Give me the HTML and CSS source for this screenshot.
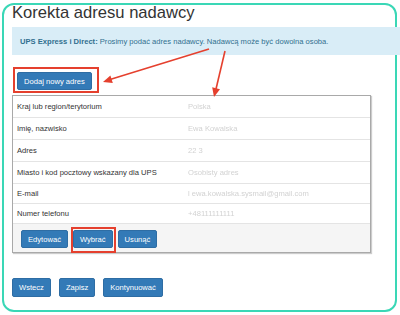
FILE: index.html
```html
<!DOCTYPE html>
<html lang="pl">
<head>
    <meta charset="UTF-8">
    <meta name="viewport" content="width=device-width, initial-scale=1.0">
    <title>Korekta adresu nadawcy</title>
    <link rel="stylesheet" href="styles.css">
</head>
<body>
    <div class="frame">
        <h1 class="title">Korekta adresu nadawcy</h1>

        <!-- informacja -->
        <div class="alert"><b>UPS Express i Direct:</b>&nbsp;Prosimy podać adres nadawcy. Nadawcą może być dowolna osoba.</div>

        <div class="add-row">
            <span class="mark mark-add"><button class="btn" type="button">Dodaj nowy adres</button></span>
        </div>

        <!-- adres -->
        <div class="panel">
            <div class="row"><span class="label">Kraj lub region/terytorium</span><span class="value">Polska</span></div>
            <div class="row"><span class="label">Imię, nazwisko</span><span class="value">Ewa Kowalska</span></div>
            <div class="row"><span class="label">Adres</span><span class="value">22 3</span></div>
            <div class="row"><span class="label">Miasto i kod pocztowy wskazany dla UPS</span><span class="value">Osobisty adres</span></div>
            <div class="row short"><span class="label">E-mail</span><span class="value">l ewa.kowalska.sysmail@gmail.com</span></div>
            <div class="row short"><span class="label">Numer telefonu</span><span class="value">+48111111111</span></div>
            <div class="panel-footer">
                <button class="btn btn-edit" type="button">Edytować</button>
                <span class="mark mark-pick"><button class="btn" type="button">Wybrać</button></span>
                <button class="btn btn-del" type="button">Usunąć</button>
            </div>
        </div>

        <div class="actions">
            <button class="btn btn-lg" type="button">Wstecz</button>
            <button class="btn btn-lg" type="button">Zapisz</button>
            <button class="btn btn-lg" type="button">Kontynuować</button>
        </div>
    </div>

    <!-- strzałki -->
    <svg class="arrows" width="400" height="315" viewBox="0 0 400 315">
        <line x1="209" y1="49" x2="110" y2="79.5" stroke="#e5402e" stroke-width="1.6"/>
        <polygon points="103,82 112.8,83.1 110.4,75.5" fill="#e5402e"/>
        <line x1="225" y1="51" x2="216" y2="89" stroke="#e5402e" stroke-width="1.6"/>
        <polygon points="214,97 220,89.2 212.2,87.3" fill="#e5402e"/>
    </svg>
</body>
</html>
```

FILE: styles.css
```css
body {
    margin: 0;
    width: 400px;
    height: 315px;
    overflow: hidden;
    position: relative;
    font-family: "Liberation Sans", Arial, sans-serif;
    color: #333333;
    background-color: #ffffff;
}

.frame {
    margin: 3px 3px 0 2px;
    height: 305px;
    padding-left: 8px;
    border: 2px solid #3ad7b6;
    border-radius: 12px;
}

.title {
    margin: 0;
    font-size: 16.6px;
    line-height: 16px;
    font-weight: normal;
    color: #333333;
}

.alert {
    display: flex;
    align-items: center;
    height: 28px;
    margin: 6px -5px 0 0;
    padding: 0 8px;
    background-color: #d9edf7;
    color: #31708f;
    font-size: 7.6px;
}

.add-row {
    display: flex;
    margin: 12px 0 0 1px;
}

.mark {
    display: inline-flex;
    border: 2px solid #e5402e;
}

.mark-add {
    padding: 3px 5px 1px 2px;
}

.btn {
    display: inline-flex;
    align-items: center;
    box-sizing: border-box;
    height: 18px;
    padding: 0 6px;
    font-family: "Liberation Sans", Arial, sans-serif;
    font-size: 7.6px;
    color: #ffffff;
    background-color: #337ab7;
    border: 1px solid #2e6da4;
    border-radius: 2px;
}

.btn-lg {
    height: 19px;
}

.panel {
    width: 359px;
    margin-top: 2px;
    box-sizing: border-box;
    border: 1px solid #a9a9a9;
    box-shadow: 1px 1px 1px rgba(0, 0, 0, 0.2);
}

.row {
    display: flex;
    align-items: center;
    box-sizing: border-box;
    height: 22px;
    border-bottom: 1px solid #e4e4e4;
    font-size: 7.6px;
}

.row.short {
    height: 20px;
}

.label {
    flex: 0 0 175px;
    box-sizing: border-box;
    padding-left: 4px;
}

.value {
    color: #d2d2d2;
    filter: blur(0.7px);
}

.panel-footer {
    display: flex;
    align-items: flex-start;
    height: 28px;
    padding-left: 8px;
    background-color: #f5f5f5;
}

.btn-edit {
    margin-top: 6px;
}

.mark-pick {
    margin: 3px 0 0 3px;
    padding: 1px 1px 3px 0;
}

.btn-del {
    margin: 6px 0 0 2px;
}

.actions {
    display: flex;
    gap: 8px;
    margin-top: 25px;
}

.arrows {
    position: absolute;
    top: 0;
    left: 0;
}
```
